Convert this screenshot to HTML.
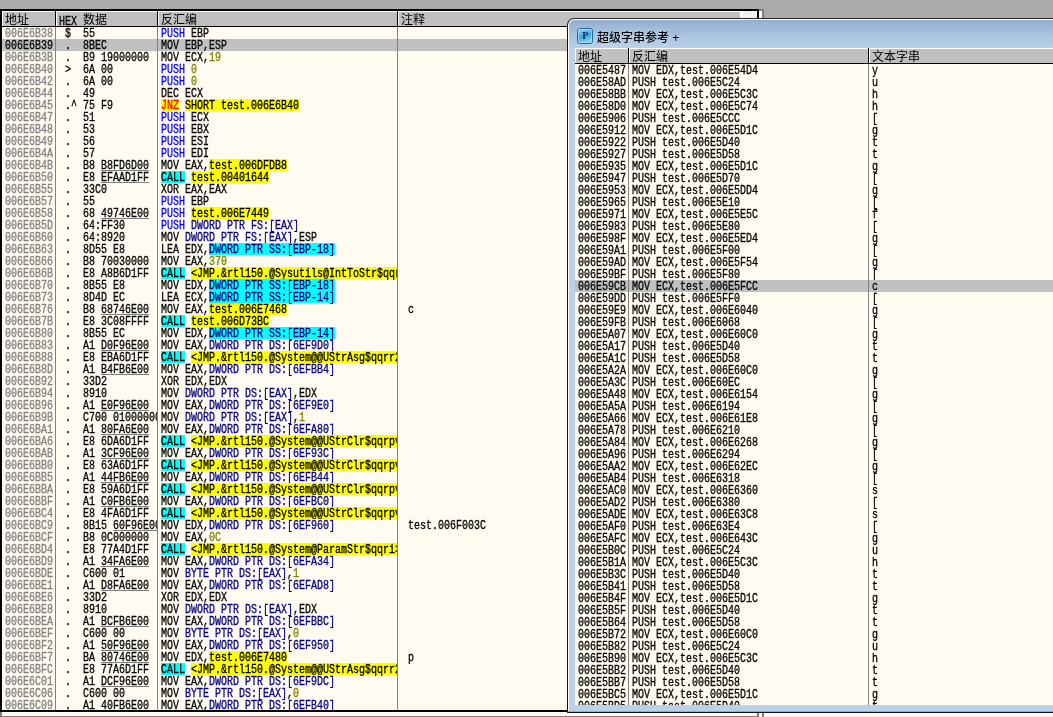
<!DOCTYPE html>
<html lang="zh-CN">
<head>
<meta charset="utf-8">
<title>OllyDbg - test.exe</title>
<style>
html,body{margin:0;padding:0}
body{width:1053px;height:717px;overflow:hidden;background:#ababab;position:relative;
 font-family:"Liberation Mono","Noto Serif CJK SC",monospace;font-size:10px;color:#000}
#all{position:absolute;left:0;top:0;width:1053px;height:717px;overflow:hidden;will-change:transform}
i{font-style:normal}
u{text-decoration:none}
/* ---------- generic OllyDbg table pane ---------- */
.pane{position:absolute;background:#fffbf0;overflow:hidden}
.hd{position:absolute;left:0;top:0;right:0;height:15px;background:#c0c0c0;border-bottom:1px solid #000}
.hc{position:absolute;top:0;height:15px;box-sizing:border-box;border-left:1px solid #fff;border-top:1px solid #fff;
 font-family:"Liberation Mono","Noto Sans CJK SC",monospace;font-size:12px;line-height:12px;white-space:pre;overflow:hidden}
.hc span{position:absolute;left:2px;top:3px}
.lt{display:inline-block;-webkit-text-stroke:0.25px;font-size:10px;line-height:12px;height:10px;vertical-align:top;transform:scaleY(1.2);transform-origin:0 0}
.hs{position:absolute;top:0;width:1px;height:15px;background:#000}
.vs{position:absolute;top:16px;bottom:0;width:1px;background:#808080;z-index:3}
.r{position:absolute;left:0;right:0;height:12px}
.r.sel{background:#c0c0c0}
.c{position:absolute;top:0;height:12px;white-space:pre;clip-path:inset(0 0 -1px 0)}
.t{display:block;-webkit-text-stroke:0.25px;font-size:10px;line-height:12px;height:10px;transform:scaleY(1.2);transform-origin:0 0}
.t i{display:inline-block;height:10px;line-height:12px;vertical-align:top}
.ul{position:absolute;top:11px;height:1px;background:#808080}
/* left (CPU) pane */
#cpu{left:2px;top:11px;width:755px;height:699px}
#cpu .a{left:3px;width:50px;color:#808080}
#cpu .sel .a{color:#000}
#cpu .h{left:57px;width:98px}
#cpu .d{left:159px;width:236px}
#cpu .m{left:406px;width:330px}
.pu{color:#0000ff}
.ca{background:#00ffff}
.jc{color:#ff0000;background:#ffff00}
.ye{background:#ffff00}
.ss{color:#000080;background:#00ffff}
.mm{color:#000080}
.co{color:#808000}
/* right (string reference) pane */
#ref{left:575px;top:48px;width:478px;height:657px}
#ref .a{left:3px;width:50px}
#ref .d{left:57px;width:236px}
#ref .m{left:297px;width:180px}
/* frames */
#cpuframe{position:absolute;left:0;top:9px;width:755px;height:699px;border:2px solid #000}
#win{position:absolute;left:567px;top:18px;width:500px;height:693px;border:1px solid #0c1218;border-top-color:#2b2b2b;border-radius:7px 0 0 0;
 background:#b9d1ea;box-shadow:inset 1px 1px 0 #fff}
#win .cap{position:absolute;left:1px;top:1px;right:0;height:28px;border-radius:6px 0 0 0;
 background:linear-gradient(#94b0d2,#b9d1ea)}
#title{position:absolute;left:597px;top:30px;font-family:"Liberation Sans","Noto Sans CJK SC",sans-serif;font-size:12px;line-height:16px;white-space:pre;color:#000;
 font-weight:500;text-shadow:0 0 5px rgba(255,255,255,.45)}
</style>
</head>
<body>
<div id="all">
<div id="cpuframe"></div>
<div class="pane" id="cpu">
 <div class="hd">
  <div class="hc" style="left:0;width:53px"><span>地址</span></div><div class="hs" style="left:53px"></div>
  <div class="hc" style="left:54px;width:101px"><span><i class="lt">HEX </i>数据</span></div><div class="hs" style="left:155px"></div>
  <div class="hc" style="left:156px;width:239px"><span>反汇编</span></div><div class="hs" style="left:395px"></div>
  <div class="hc" style="left:396px;width:342px"><span>注释</span></div>
  <div style="position:absolute;left:738px;top:0;width:17px;height:16px;background:linear-gradient(90deg,#fff 0,#fff 2px,#efefef 3px,#f2f2f2 100%)"></div>
 </div>
 <div class="vs" style="left:53px"></div><div class="vs" style="left:155px"></div><div class="vs" style="left:395px"></div>
<div class="r" style="top:16px"><div class="c a"><span class="t">006E6B38</span></div><div class="c h"><span class="t"> $  55</span></div><div class="c d"><span class="t"><i class="pu">PUSH</i> EBP</span></div></div>
<div class="r sel" style="top:28px"><div class="c a"><span class="t">006E6B39</span></div><div class="c h"><span class="t"> .  8BEC</span></div><div class="c d"><span class="t">MOV EBP,ESP</span></div></div>
<div class="r" style="top:40px"><div class="c a"><span class="t">006E6B3B</span></div><div class="c h"><span class="t"> .  B9 19000000</span></div><div class="c d"><span class="t">MOV ECX,<i class="co">19</i></span></div></div>
<div class="r" style="top:52px"><div class="c a"><span class="t">006E6B40</span></div><div class="c h"><span class="t"> &gt;  6A 00</span></div><div class="c d"><span class="t"><i class="pu">PUSH</i> <i class="co">0</i></span></div></div>
<div class="r" style="top:64px"><div class="c a"><span class="t">006E6B42</span></div><div class="c h"><span class="t"> .  6A 00</span></div><div class="c d"><span class="t"><i class="pu">PUSH</i> <i class="co">0</i></span></div></div>
<div class="r" style="top:76px"><div class="c a"><span class="t">006E6B44</span></div><div class="c h"><span class="t"> .  49</span></div><div class="c d"><span class="t">DEC ECX</span></div></div>
<div class="r" style="top:88px"><div class="c a"><span class="t">006E6B45</span></div><div class="c h"><span class="t"> .^ 75 F9</span></div><div class="c d"><span class="t"><i class="jc">JNZ</i> <i class="ye">SHORT test.006E6B40</i></span></div></div>
<div class="r" style="top:100px"><div class="c a"><span class="t">006E6B47</span></div><div class="c h"><span class="t"> .  51</span></div><div class="c d"><span class="t"><i class="pu">PUSH</i> ECX</span></div></div>
<div class="r" style="top:112px"><div class="c a"><span class="t">006E6B48</span></div><div class="c h"><span class="t"> .  53</span></div><div class="c d"><span class="t"><i class="pu">PUSH</i> EBX</span></div></div>
<div class="r" style="top:124px"><div class="c a"><span class="t">006E6B49</span></div><div class="c h"><span class="t"> .  56</span></div><div class="c d"><span class="t"><i class="pu">PUSH</i> ESI</span></div></div>
<div class="r" style="top:136px"><div class="c a"><span class="t">006E6B4A</span></div><div class="c h"><span class="t"> .  57</span></div><div class="c d"><span class="t"><i class="pu">PUSH</i> EDI</span></div></div>
<div class="r" style="top:148px"><div class="c a"><span class="t">006E6B4B</span></div><div class="c h"><span class="t"> .  B8 B8FD6D00</span><b class="ul" style="left:42px;width:48px"></b></div><div class="c d"><span class="t">MOV EAX,<i class="ye">test.006DFDB8</i></span></div></div>
<div class="r" style="top:160px"><div class="c a"><span class="t">006E6B50</span></div><div class="c h"><span class="t"> .  E8 EFAAD1FF</span><b class="ul" style="left:42px;width:48px"></b></div><div class="c d"><span class="t"><i class="ca">CALL</i> <i class="ye">test.00401644</i></span></div></div>
<div class="r" style="top:172px"><div class="c a"><span class="t">006E6B55</span></div><div class="c h"><span class="t"> .  33C0</span></div><div class="c d"><span class="t">XOR EAX,EAX</span></div></div>
<div class="r" style="top:184px"><div class="c a"><span class="t">006E6B57</span></div><div class="c h"><span class="t"> .  55</span></div><div class="c d"><span class="t"><i class="pu">PUSH</i> EBP</span></div></div>
<div class="r" style="top:196px"><div class="c a"><span class="t">006E6B58</span></div><div class="c h"><span class="t"> .  68 49746E00</span><b class="ul" style="left:42px;width:48px"></b></div><div class="c d"><span class="t"><i class="pu">PUSH</i> <i class="ye">test.006E7449</i></span></div></div>
<div class="r" style="top:208px"><div class="c a"><span class="t">006E6B5D</span></div><div class="c h"><span class="t"> .  64:FF30</span></div><div class="c d"><span class="t"><i class="pu">PUSH</i> <i class="mm">DWORD PTR FS:[EAX]</i></span></div></div>
<div class="r" style="top:220px"><div class="c a"><span class="t">006E6B60</span></div><div class="c h"><span class="t"> .  64:8920</span></div><div class="c d"><span class="t">MOV <i class="mm">DWORD PTR FS:[EAX]</i>,ESP</span></div></div>
<div class="r" style="top:232px"><div class="c a"><span class="t">006E6B63</span></div><div class="c h"><span class="t"> .  8D55 E8</span></div><div class="c d"><span class="t">LEA EDX,<i class="ss">DWORD PTR SS:[EBP-18]</i></span></div></div>
<div class="r" style="top:244px"><div class="c a"><span class="t">006E6B66</span></div><div class="c h"><span class="t"> .  B8 70030000</span></div><div class="c d"><span class="t">MOV EAX,<i class="co">370</i></span></div></div>
<div class="r" style="top:256px"><div class="c a"><span class="t">006E6B6B</span></div><div class="c h"><span class="t"> .  E8 A8B6D1FF</span></div><div class="c d"><span class="t"><i class="ca">CALL</i> <i class="ye">&lt;JMP.&amp;rtl150.@Sysutils@IntToStr$qqri&gt;</i></span></div></div>
<div class="r" style="top:268px"><div class="c a"><span class="t">006E6B70</span></div><div class="c h"><span class="t"> .  8B55 E8</span></div><div class="c d"><span class="t">MOV EDX,<i class="ss">DWORD PTR SS:[EBP-18]</i></span></div></div>
<div class="r" style="top:280px"><div class="c a"><span class="t">006E6B73</span></div><div class="c h"><span class="t"> .  8D4D EC</span></div><div class="c d"><span class="t">LEA ECX,<i class="ss">DWORD PTR SS:[EBP-14]</i></span></div></div>
<div class="r" style="top:292px"><div class="c a"><span class="t">006E6B76</span></div><div class="c h"><span class="t"> .  B8 68746E00</span><b class="ul" style="left:42px;width:48px"></b></div><div class="c d"><span class="t">MOV EAX,<i class="ye">test.006E7468</i></span></div><div class="c m"><span class="t">c</span></div></div>
<div class="r" style="top:304px"><div class="c a"><span class="t">006E6B7B</span></div><div class="c h"><span class="t"> .  E8 3C08FFFF</span></div><div class="c d"><span class="t"><i class="ca">CALL</i> <i class="ye">test.006D73BC</i></span></div></div>
<div class="r" style="top:316px"><div class="c a"><span class="t">006E6B80</span></div><div class="c h"><span class="t"> .  8B55 EC</span></div><div class="c d"><span class="t">MOV EDX,<i class="ss">DWORD PTR SS:[EBP-14]</i></span></div></div>
<div class="r" style="top:328px"><div class="c a"><span class="t">006E6B83</span></div><div class="c h"><span class="t"> .  A1 D0F96E00</span><b class="ul" style="left:42px;width:48px"></b></div><div class="c d"><span class="t">MOV EAX,<i class="mm">DWORD PTR DS:[6EF9D0]</i></span></div></div>
<div class="r" style="top:340px"><div class="c a"><span class="t">006E6B88</span></div><div class="c h"><span class="t"> .  E8 EBA6D1FF</span></div><div class="c d"><span class="t"><i class="ca">CALL</i> <i class="ye">&lt;JMP.&amp;rtl150.@System@@UStrAsg$qqrr20</i></span></div></div>
<div class="r" style="top:352px"><div class="c a"><span class="t">006E6B8D</span></div><div class="c h"><span class="t"> .  A1 B4FB6E00</span><b class="ul" style="left:42px;width:48px"></b></div><div class="c d"><span class="t">MOV EAX,<i class="mm">DWORD PTR DS:[6EFBB4]</i></span></div></div>
<div class="r" style="top:364px"><div class="c a"><span class="t">006E6B92</span></div><div class="c h"><span class="t"> .  33D2</span></div><div class="c d"><span class="t">XOR EDX,EDX</span></div></div>
<div class="r" style="top:376px"><div class="c a"><span class="t">006E6B94</span></div><div class="c h"><span class="t"> .  8910</span></div><div class="c d"><span class="t">MOV <i class="mm">DWORD PTR DS:[EAX]</i>,EDX</span></div></div>
<div class="r" style="top:388px"><div class="c a"><span class="t">006E6B96</span></div><div class="c h"><span class="t"> .  A1 E0F96E00</span><b class="ul" style="left:42px;width:48px"></b></div><div class="c d"><span class="t">MOV EAX,<i class="mm">DWORD PTR DS:[6EF9E0]</i></span></div></div>
<div class="r" style="top:400px"><div class="c a"><span class="t">006E6B9B</span></div><div class="c h"><span class="t"> .  C700 01000000</span></div><div class="c d"><span class="t">MOV <i class="mm">DWORD PTR DS:[EAX]</i>,<i class="co">1</i></span></div></div>
<div class="r" style="top:412px"><div class="c a"><span class="t">006E6BA1</span></div><div class="c h"><span class="t"> .  A1 80FA6E00</span><b class="ul" style="left:42px;width:48px"></b></div><div class="c d"><span class="t">MOV EAX,<i class="mm">DWORD PTR DS:[6EFA80]</i></span></div></div>
<div class="r" style="top:424px"><div class="c a"><span class="t">006E6BA6</span></div><div class="c h"><span class="t"> .  E8 6DA6D1FF</span></div><div class="c d"><span class="t"><i class="ca">CALL</i> <i class="ye">&lt;JMP.&amp;rtl150.@System@@UStrClr$qqrpv&gt;</i></span></div></div>
<div class="r" style="top:436px"><div class="c a"><span class="t">006E6BAB</span></div><div class="c h"><span class="t"> .  A1 3CF96E00</span><b class="ul" style="left:42px;width:48px"></b></div><div class="c d"><span class="t">MOV EAX,<i class="mm">DWORD PTR DS:[6EF93C]</i></span></div></div>
<div class="r" style="top:448px"><div class="c a"><span class="t">006E6BB0</span></div><div class="c h"><span class="t"> .  E8 63A6D1FF</span></div><div class="c d"><span class="t"><i class="ca">CALL</i> <i class="ye">&lt;JMP.&amp;rtl150.@System@@UStrClr$qqrpv&gt;</i></span></div></div>
<div class="r" style="top:460px"><div class="c a"><span class="t">006E6BB5</span></div><div class="c h"><span class="t"> .  A1 44FB6E00</span><b class="ul" style="left:42px;width:48px"></b></div><div class="c d"><span class="t">MOV EAX,<i class="mm">DWORD PTR DS:[6EFB44]</i></span></div></div>
<div class="r" style="top:472px"><div class="c a"><span class="t">006E6BBA</span></div><div class="c h"><span class="t"> .  E8 59A6D1FF</span></div><div class="c d"><span class="t"><i class="ca">CALL</i> <i class="ye">&lt;JMP.&amp;rtl150.@System@@UStrClr$qqrpv&gt;</i></span></div></div>
<div class="r" style="top:484px"><div class="c a"><span class="t">006E6BBF</span></div><div class="c h"><span class="t"> .  A1 C0FB6E00</span><b class="ul" style="left:42px;width:48px"></b></div><div class="c d"><span class="t">MOV EAX,<i class="mm">DWORD PTR DS:[6EFBC0]</i></span></div></div>
<div class="r" style="top:496px"><div class="c a"><span class="t">006E6BC4</span></div><div class="c h"><span class="t"> .  E8 4FA6D1FF</span></div><div class="c d"><span class="t"><i class="ca">CALL</i> <i class="ye">&lt;JMP.&amp;rtl150.@System@@UStrClr$qqrpv&gt;</i></span></div></div>
<div class="r" style="top:508px"><div class="c a"><span class="t">006E6BC9</span></div><div class="c h"><span class="t"> .  8B15 60F96E00</span><b class="ul" style="left:54px;width:48px"></b></div><div class="c d"><span class="t">MOV EDX,<i class="mm">DWORD PTR DS:[6EF960]</i></span></div><div class="c m"><span class="t">test.006F003C</span></div></div>
<div class="r" style="top:520px"><div class="c a"><span class="t">006E6BCF</span></div><div class="c h"><span class="t"> .  B8 0C000000</span></div><div class="c d"><span class="t">MOV EAX,<i class="co">0C</i></span></div></div>
<div class="r" style="top:532px"><div class="c a"><span class="t">006E6BD4</span></div><div class="c h"><span class="t"> .  E8 77A4D1FF</span></div><div class="c d"><span class="t"><i class="ca">CALL</i> <i class="ye">&lt;JMP.&amp;rtl150.@System@ParamStr$qqri&gt;</i></span></div></div>
<div class="r" style="top:544px"><div class="c a"><span class="t">006E6BD9</span></div><div class="c h"><span class="t"> .  A1 34FA6E00</span><b class="ul" style="left:42px;width:48px"></b></div><div class="c d"><span class="t">MOV EAX,<i class="mm">DWORD PTR DS:[6EFA34]</i></span></div></div>
<div class="r" style="top:556px"><div class="c a"><span class="t">006E6BDE</span></div><div class="c h"><span class="t"> .  C600 01</span></div><div class="c d"><span class="t">MOV <i class="mm">BYTE PTR DS:[EAX]</i>,<i class="co">1</i></span></div></div>
<div class="r" style="top:568px"><div class="c a"><span class="t">006E6BE1</span></div><div class="c h"><span class="t"> .  A1 D8FA6E00</span><b class="ul" style="left:42px;width:48px"></b></div><div class="c d"><span class="t">MOV EAX,<i class="mm">DWORD PTR DS:[6EFAD8]</i></span></div></div>
<div class="r" style="top:580px"><div class="c a"><span class="t">006E6BE6</span></div><div class="c h"><span class="t"> .  33D2</span></div><div class="c d"><span class="t">XOR EDX,EDX</span></div></div>
<div class="r" style="top:592px"><div class="c a"><span class="t">006E6BE8</span></div><div class="c h"><span class="t"> .  8910</span></div><div class="c d"><span class="t">MOV <i class="mm">DWORD PTR DS:[EAX]</i>,EDX</span></div></div>
<div class="r" style="top:604px"><div class="c a"><span class="t">006E6BEA</span></div><div class="c h"><span class="t"> .  A1 BCFB6E00</span><b class="ul" style="left:42px;width:48px"></b></div><div class="c d"><span class="t">MOV EAX,<i class="mm">DWORD PTR DS:[6EFBBC]</i></span></div></div>
<div class="r" style="top:616px"><div class="c a"><span class="t">006E6BEF</span></div><div class="c h"><span class="t"> .  C600 00</span></div><div class="c d"><span class="t">MOV <i class="mm">BYTE PTR DS:[EAX]</i>,<i class="co">0</i></span></div></div>
<div class="r" style="top:628px"><div class="c a"><span class="t">006E6BF2</span></div><div class="c h"><span class="t"> .  A1 50F96E00</span><b class="ul" style="left:42px;width:48px"></b></div><div class="c d"><span class="t">MOV EAX,<i class="mm">DWORD PTR DS:[6EF950]</i></span></div></div>
<div class="r" style="top:640px"><div class="c a"><span class="t">006E6BF7</span></div><div class="c h"><span class="t"> .  BA 80746E00</span><b class="ul" style="left:42px;width:48px"></b></div><div class="c d"><span class="t">MOV EDX,<i class="ye">test.006E7480</i></span></div><div class="c m"><span class="t">p</span></div></div>
<div class="r" style="top:652px"><div class="c a"><span class="t">006E6BFC</span></div><div class="c h"><span class="t"> .  E8 77A6D1FF</span></div><div class="c d"><span class="t"><i class="ca">CALL</i> <i class="ye">&lt;JMP.&amp;rtl150.@System@@UStrAsg$qqrr20</i></span></div></div>
<div class="r" style="top:664px"><div class="c a"><span class="t">006E6C01</span></div><div class="c h"><span class="t"> .  A1 DCF96E00</span><b class="ul" style="left:42px;width:48px"></b></div><div class="c d"><span class="t">MOV EAX,<i class="mm">DWORD PTR DS:[6EF9DC]</i></span></div></div>
<div class="r" style="top:676px"><div class="c a"><span class="t">006E6C06</span></div><div class="c h"><span class="t"> .  C600 00</span></div><div class="c d"><span class="t">MOV <i class="mm">BYTE PTR DS:[EAX]</i>,<i class="co">0</i></span></div></div>
<div class="r" style="top:688px"><div class="c a"><span class="t">006E6C09</span></div><div class="c h"><span class="t"> .  A1 40FB6E00</span><b class="ul" style="left:42px;width:48px"></b></div><div class="c d"><span class="t">MOV EAX,<i class="mm">DWORD PTR DS:[6EFB40]</i></span></div></div>
</div>
<!-- splitter bits right of / below the CPU pane -->
<div style="position:absolute;left:759px;top:9px;width:5px;height:708px;background:#808080"></div>
<div style="position:absolute;left:759px;top:11px;width:3px;height:706px;background:#fff"></div>
<div style="position:absolute;left:0;top:712px;width:759px;height:5px;background:#808080"></div>
<div style="position:absolute;left:2px;top:712px;width:755px;height:4px;background:#fffbf0"></div>
<div style="position:absolute;left:764px;top:712px;width:289px;height:5px;background:#fffbf0"></div>

<div id="win"><div class="cap"></div></div>
<svg style="position:absolute;left:577px;top:28px" width="16" height="16" viewBox="0 0 16 16">
 <defs><linearGradient id="pg" x1="0" y1="0" x2="0.3" y2="1"><stop offset="0" stop-color="#a9e0f8"/><stop offset=".55" stop-color="#3ea6e0"/><stop offset="1" stop-color="#7fd4f4"/></linearGradient></defs>
 <rect x=".5" y=".5" width="15" height="15" rx="2.2" fill="url(#pg)" stroke="#1f6a98"/>
 <rect x="1.5" y="1.5" width="13" height="13" rx="1.5" fill="none" stroke="#c9ecfb" stroke-opacity=".55"/>
 <text x="8.2" y="11.2" text-anchor="middle" font-family="Liberation Serif,serif" font-weight="bold" font-size="10" fill="#0c2e66">P</text>
</svg>
<div id="title">超级字串参考 +</div>
<div class="pane" id="ref">
 <div class="hd">
  <div class="hc" style="left:0;width:53px"><span>地址</span></div><div class="hs" style="left:53px"></div>
  <div class="hc" style="left:54px;width:239px"><span>反汇编</span></div><div class="hs" style="left:293px"></div>
  <div class="hc" style="left:294px;width:200px"><span>文本字串</span></div>
 </div>
 <div class="vs" style="left:53px"></div><div class="vs" style="left:293px"></div>
<div class="r" style="top:16px"><div class="c a"><span class="t">006E5487</span></div><div class="c d"><span class="t">MOV EDX,test.006E54D4</span></div><div class="c m"><span class="t">y</span></div></div>
<div class="r" style="top:28px"><div class="c a"><span class="t">006E58AD</span></div><div class="c d"><span class="t">PUSH test.006E5C24</span></div><div class="c m"><span class="t">u</span></div></div>
<div class="r" style="top:40px"><div class="c a"><span class="t">006E58BB</span></div><div class="c d"><span class="t">MOV ECX,test.006E5C3C</span></div><div class="c m"><span class="t">h</span></div></div>
<div class="r" style="top:52px"><div class="c a"><span class="t">006E58D0</span></div><div class="c d"><span class="t">MOV ECX,test.006E5C74</span></div><div class="c m"><span class="t">h</span></div></div>
<div class="r" style="top:64px"><div class="c a"><span class="t">006E5906</span></div><div class="c d"><span class="t">PUSH test.006E5CCC</span></div><div class="c m"><span class="t">[</span></div></div>
<div class="r" style="top:76px"><div class="c a"><span class="t">006E5912</span></div><div class="c d"><span class="t">MOV ECX,test.006E5D1C</span></div><div class="c m"><span class="t">g</span></div></div>
<div class="r" style="top:88px"><div class="c a"><span class="t">006E5922</span></div><div class="c d"><span class="t">PUSH test.006E5D40</span></div><div class="c m"><span class="t">t</span></div></div>
<div class="r" style="top:100px"><div class="c a"><span class="t">006E5927</span></div><div class="c d"><span class="t">PUSH test.006E5D58</span></div><div class="c m"><span class="t">t</span></div></div>
<div class="r" style="top:112px"><div class="c a"><span class="t">006E5935</span></div><div class="c d"><span class="t">MOV ECX,test.006E5D1C</span></div><div class="c m"><span class="t">g</span></div></div>
<div class="r" style="top:124px"><div class="c a"><span class="t">006E5947</span></div><div class="c d"><span class="t">PUSH test.006E5D70</span></div><div class="c m"><span class="t">[</span></div></div>
<div class="r" style="top:136px"><div class="c a"><span class="t">006E5953</span></div><div class="c d"><span class="t">MOV ECX,test.006E5DD4</span></div><div class="c m"><span class="t">g</span></div></div>
<div class="r" style="top:148px"><div class="c a"><span class="t">006E5965</span></div><div class="c d"><span class="t">PUSH test.006E5E10</span></div><div class="c m"><span class="t">[</span></div></div>
<div class="r" style="top:160px"><div class="c a"><span class="t">006E5971</span></div><div class="c d"><span class="t">MOV ECX,test.006E5E5C</span></div><div class="c m"><span class="t">f</span></div></div>
<div class="r" style="top:172px"><div class="c a"><span class="t">006E5983</span></div><div class="c d"><span class="t">PUSH test.006E5E80</span></div><div class="c m"><span class="t">[</span></div></div>
<div class="r" style="top:184px"><div class="c a"><span class="t">006E598F</span></div><div class="c d"><span class="t">MOV ECX,test.006E5ED4</span></div><div class="c m"><span class="t">g</span></div></div>
<div class="r" style="top:196px"><div class="c a"><span class="t">006E59A1</span></div><div class="c d"><span class="t">PUSH test.006E5F00</span></div><div class="c m"><span class="t">[</span></div></div>
<div class="r" style="top:208px"><div class="c a"><span class="t">006E59AD</span></div><div class="c d"><span class="t">MOV ECX,test.006E5F54</span></div><div class="c m"><span class="t">g</span></div></div>
<div class="r" style="top:220px"><div class="c a"><span class="t">006E59BF</span></div><div class="c d"><span class="t">PUSH test.006E5F80</span></div><div class="c m"><span class="t">[</span></div></div>
<div class="r sel" style="top:232px"><div class="c a"><span class="t">006E59CB</span></div><div class="c d"><span class="t">MOV ECX,test.006E5FCC</span></div><div class="c m"><span class="t">c</span></div></div>
<div class="r" style="top:244px"><div class="c a"><span class="t">006E59DD</span></div><div class="c d"><span class="t">PUSH test.006E5FF0</span></div><div class="c m"><span class="t">[</span></div></div>
<div class="r" style="top:256px"><div class="c a"><span class="t">006E59E9</span></div><div class="c d"><span class="t">MOV ECX,test.006E6040</span></div><div class="c m"><span class="t">g</span></div></div>
<div class="r" style="top:268px"><div class="c a"><span class="t">006E59FB</span></div><div class="c d"><span class="t">PUSH test.006E6068</span></div><div class="c m"><span class="t">[</span></div></div>
<div class="r" style="top:280px"><div class="c a"><span class="t">006E5A07</span></div><div class="c d"><span class="t">MOV ECX,test.006E60C0</span></div><div class="c m"><span class="t">g</span></div></div>
<div class="r" style="top:292px"><div class="c a"><span class="t">006E5A17</span></div><div class="c d"><span class="t">PUSH test.006E5D40</span></div><div class="c m"><span class="t">t</span></div></div>
<div class="r" style="top:304px"><div class="c a"><span class="t">006E5A1C</span></div><div class="c d"><span class="t">PUSH test.006E5D58</span></div><div class="c m"><span class="t">t</span></div></div>
<div class="r" style="top:316px"><div class="c a"><span class="t">006E5A2A</span></div><div class="c d"><span class="t">MOV ECX,test.006E60C0</span></div><div class="c m"><span class="t">g</span></div></div>
<div class="r" style="top:328px"><div class="c a"><span class="t">006E5A3C</span></div><div class="c d"><span class="t">PUSH test.006E60EC</span></div><div class="c m"><span class="t">[</span></div></div>
<div class="r" style="top:340px"><div class="c a"><span class="t">006E5A48</span></div><div class="c d"><span class="t">MOV ECX,test.006E6154</span></div><div class="c m"><span class="t">g</span></div></div>
<div class="r" style="top:352px"><div class="c a"><span class="t">006E5A5A</span></div><div class="c d"><span class="t">PUSH test.006E6194</span></div><div class="c m"><span class="t">[</span></div></div>
<div class="r" style="top:364px"><div class="c a"><span class="t">006E5A66</span></div><div class="c d"><span class="t">MOV ECX,test.006E61E8</span></div><div class="c m"><span class="t">g</span></div></div>
<div class="r" style="top:376px"><div class="c a"><span class="t">006E5A78</span></div><div class="c d"><span class="t">PUSH test.006E6210</span></div><div class="c m"><span class="t">[</span></div></div>
<div class="r" style="top:388px"><div class="c a"><span class="t">006E5A84</span></div><div class="c d"><span class="t">MOV ECX,test.006E6268</span></div><div class="c m"><span class="t">g</span></div></div>
<div class="r" style="top:400px"><div class="c a"><span class="t">006E5A96</span></div><div class="c d"><span class="t">PUSH test.006E6294</span></div><div class="c m"><span class="t">[</span></div></div>
<div class="r" style="top:412px"><div class="c a"><span class="t">006E5AA2</span></div><div class="c d"><span class="t">MOV ECX,test.006E62EC</span></div><div class="c m"><span class="t">g</span></div></div>
<div class="r" style="top:424px"><div class="c a"><span class="t">006E5AB4</span></div><div class="c d"><span class="t">PUSH test.006E6318</span></div><div class="c m"><span class="t">[</span></div></div>
<div class="r" style="top:436px"><div class="c a"><span class="t">006E5AC0</span></div><div class="c d"><span class="t">MOV ECX,test.006E6360</span></div><div class="c m"><span class="t">s</span></div></div>
<div class="r" style="top:448px"><div class="c a"><span class="t">006E5AD2</span></div><div class="c d"><span class="t">PUSH test.006E6380</span></div><div class="c m"><span class="t">[</span></div></div>
<div class="r" style="top:460px"><div class="c a"><span class="t">006E5ADE</span></div><div class="c d"><span class="t">MOV ECX,test.006E63C8</span></div><div class="c m"><span class="t">s</span></div></div>
<div class="r" style="top:472px"><div class="c a"><span class="t">006E5AF0</span></div><div class="c d"><span class="t">PUSH test.006E63E4</span></div><div class="c m"><span class="t">[</span></div></div>
<div class="r" style="top:484px"><div class="c a"><span class="t">006E5AFC</span></div><div class="c d"><span class="t">MOV ECX,test.006E643C</span></div><div class="c m"><span class="t">g</span></div></div>
<div class="r" style="top:496px"><div class="c a"><span class="t">006E5B0C</span></div><div class="c d"><span class="t">PUSH test.006E5C24</span></div><div class="c m"><span class="t">u</span></div></div>
<div class="r" style="top:508px"><div class="c a"><span class="t">006E5B1A</span></div><div class="c d"><span class="t">MOV ECX,test.006E5C3C</span></div><div class="c m"><span class="t">h</span></div></div>
<div class="r" style="top:520px"><div class="c a"><span class="t">006E5B3C</span></div><div class="c d"><span class="t">PUSH test.006E5D40</span></div><div class="c m"><span class="t">t</span></div></div>
<div class="r" style="top:532px"><div class="c a"><span class="t">006E5B41</span></div><div class="c d"><span class="t">PUSH test.006E5D58</span></div><div class="c m"><span class="t">t</span></div></div>
<div class="r" style="top:544px"><div class="c a"><span class="t">006E5B4F</span></div><div class="c d"><span class="t">MOV ECX,test.006E5D1C</span></div><div class="c m"><span class="t">g</span></div></div>
<div class="r" style="top:556px"><div class="c a"><span class="t">006E5B5F</span></div><div class="c d"><span class="t">PUSH test.006E5D40</span></div><div class="c m"><span class="t">t</span></div></div>
<div class="r" style="top:568px"><div class="c a"><span class="t">006E5B64</span></div><div class="c d"><span class="t">PUSH test.006E5D58</span></div><div class="c m"><span class="t">t</span></div></div>
<div class="r" style="top:580px"><div class="c a"><span class="t">006E5B72</span></div><div class="c d"><span class="t">MOV ECX,test.006E60C0</span></div><div class="c m"><span class="t">g</span></div></div>
<div class="r" style="top:592px"><div class="c a"><span class="t">006E5B82</span></div><div class="c d"><span class="t">PUSH test.006E5C24</span></div><div class="c m"><span class="t">u</span></div></div>
<div class="r" style="top:604px"><div class="c a"><span class="t">006E5B90</span></div><div class="c d"><span class="t">MOV ECX,test.006E5C3C</span></div><div class="c m"><span class="t">h</span></div></div>
<div class="r" style="top:616px"><div class="c a"><span class="t">006E5BB2</span></div><div class="c d"><span class="t">PUSH test.006E5D40</span></div><div class="c m"><span class="t">t</span></div></div>
<div class="r" style="top:628px"><div class="c a"><span class="t">006E5BB7</span></div><div class="c d"><span class="t">PUSH test.006E5D58</span></div><div class="c m"><span class="t">t</span></div></div>
<div class="r" style="top:640px"><div class="c a"><span class="t">006E5BC5</span></div><div class="c d"><span class="t">MOV ECX,test.006E5D1C</span></div><div class="c m"><span class="t">g</span></div></div>
<div class="r" style="top:652px"><div class="c a"><span class="t">006E5BD5</span></div><div class="c d"><span class="t">PUSH test.006E5D40</span></div><div class="c m"><span class="t">t</span></div></div>
</div>
<!-- bottom edge of the reference window -->
<div style="position:absolute;left:568px;top:711px;width:485px;height:1px;background:#35d2f2"></div>
</div>
</body>
</html>
